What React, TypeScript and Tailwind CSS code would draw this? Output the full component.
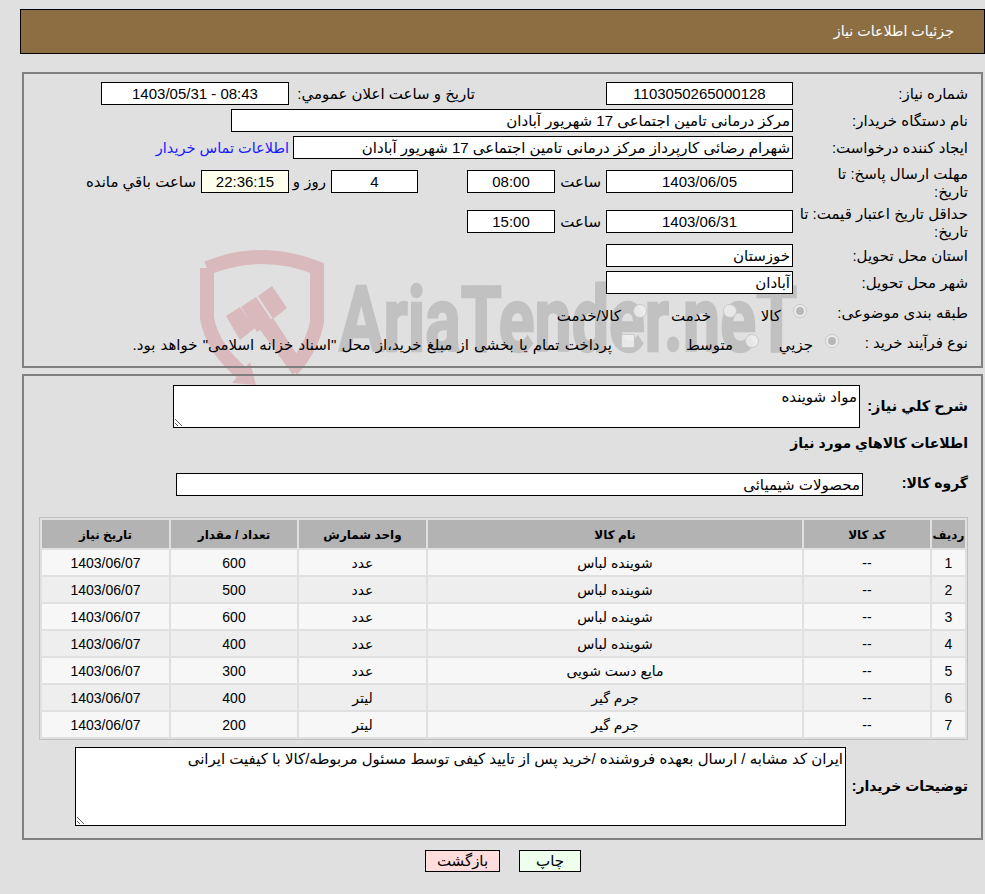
const F = "font-['Liberation_Sans','DejaVu_Sans',sans-serif]";

function Box({ w, children, center, bg }: { w: string; children?: React.ReactNode; center?: boolean; bg?: string }) {
  return (
    <div className={`${w} ${bg ?? "bg-white"} ${center ? "text-center" : "text-right"} h-[23px] shrink-0 border border-black px-[2px] leading-[21px] whitespace-nowrap overflow-hidden`}>
      {children}
    </div>
  );
}

function Radio({ checked }: { checked?: boolean }) {
  return (
    <span className="mt-[3px] flex h-[14px] w-[14px] shrink-0 items-center justify-center rounded-full border border-[#c8c8c8] bg-[#f0f0f0]/80">
      {checked && <span className="h-[8px] w-[8px] rounded-full bg-[#b8b8b8]" />}
    </span>
  );
}

const rows = [
  ["1", "--", "شوینده لباس", "عدد", "600", "1403/06/07"],
  ["2", "--", "شوینده لباس", "عدد", "500", "1403/06/07"],
  ["3", "--", "شوینده لباس", "عدد", "600", "1403/06/07"],
  ["4", "--", "شوینده لباس", "عدد", "400", "1403/06/07"],
  ["5", "--", "مایع دست شویی", "عدد", "300", "1403/06/07"],
  ["6", "--", "جرم گیر", "لیتر", "400", "1403/06/07"],
  ["7", "--", "جرم گیر", "لیتر", "200", "1403/06/07"],
];
const heads = ["رديف", "کد کالا", "نام کالا", "واحد شمارش", "تعداد / مقدار", "تاریخ نیاز"];
const widths = ["w-[33px]", "w-[126px]", "w-[374px]", "w-[127px]", "w-[126px]", "w-[127px]"];

function Watermark() {
  const c = "#d9b9bb";
  return (
    <svg dir="ltr" className="absolute left-[190px] top-[245px] z-0" width="795" height="150" viewBox="190 245 795 150">
      <path d="M207 268 Q262 246 317 268 L317 322 Q312 348 292 370" fill="none" stroke={c} strokeWidth="14" />
      <path d="M207 268 L207 318 Q212 348 243 374" fill="none" stroke={c} strokeWidth="14" />
      <path d="M258 327 L273 318 L302 362 L293 375 Z M250 362 L256 385 L232 383 Z" fill={c} />
      <path d="M226 316 L240 307 L255 328 L240 340 Z" fill={c} />
      <path d="M241 307 L256 297 L273 322 L257 332 Z" fill={c} />
      <path d="M258 296 L272 286 L287 308 L273 319 Z" fill={c} />
      <text x="339" y="351" direction="ltr" fill="#c1c1c1" stroke="#c1c1c1" strokeWidth="2.5" fontFamily="Roboto, sans-serif" fontWeight="700" fontSize="90" textLength="458" lengthAdjust="spacingAndGlyphs">AriaTender.neT</text>
    </svg>
  );
}

export default function App() {
  return (
    <div dir="rtl" className={`${F} relative h-[894px] w-[985px] overflow-hidden bg-[#e0e0e0] text-[15px] text-black`}>
      <Watermark />
      <div className="relative z-10 pl-5 pt-[9px]">
        <div className="flex h-[45px] items-center border border-black bg-[#8d6e42] pr-[30px] text-[14.25px] text-white">جزئیات اطلاعات نیاز</div>
      </div>

      <div className="relative z-10 ml-[22px] mr-[2px] mt-[18px] flex h-[296px] flex-col border-2 border-[#808080] pr-[13px] pt-[8px]">
        <div className="flex h-[27px]">
          <div className="w-[175px] shrink-0 pt-[1px]">شماره نیاز:</div>
          <Box w="w-[187px]" center>1103050265000128</Box>
          <div className="w-[131px] shrink-0" />
          <div className="w-[186px] shrink-0 pt-[1px]">تاریخ و ساعت اعلان عمومي:</div>
          <Box w="w-[188px]" center><span dir="ltr">1403/05/31 - 08:43</span></Box>
        </div>
        <div className="flex h-[27px]">
          <div className="w-[175px] shrink-0 pt-[1px]">نام دستگاه خریدار:</div>
          <Box w="w-[562px]">مرکز درمانی تامین اجتماعی 17 شهریور آبادان</Box>
        </div>
        <div className="flex h-[34px]">
          <div className="w-[175px] shrink-0 pt-[1px]">ایجاد کننده درخواست:</div>
          <Box w="w-[500px]">شهرام رضائی کارپرداز مرکز درمانی تامین اجتماعی 17 شهریور آبادان</Box>
          <a className="mr-[4px] pt-[2px] text-[14.5px] text-[#1a1aff]">اطلاعات تماس خریدار</a>
        </div>
        <div className="flex h-[40px]">
          <div className="-mt-[5px] w-[175px] shrink-0 pl-[15px] leading-[18px]">مهلت ارسال پاسخ: تا تاریخ:</div>
          <Box w="w-[187px]" center>1403/06/05</Box>
          <div className="w-[51px] shrink-0 pr-[5px] pt-[1px]">ساعت</div>
          <Box w="w-[88px]" center>08:00</Box>
          <div className="w-[49px] shrink-0" />
          <Box w="w-[87px]" center>4</Box>
          <div className="w-[42px] shrink-0 pr-[5px] pt-[1px]">روز و</div>
          <Box w="w-[88px]" center bg="bg-[#ffffee]">22:36:15</Box>
          <div className="whitespace-nowrap pr-[5px] pt-[1px]">ساعت باقي مانده</div>
        </div>
        <div className="flex h-[34px]">
          <div className="-mt-[5px] w-[175px] shrink-0 leading-[18px]">حداقل تاریخ اعتبار قیمت: تا تاریخ:</div>
          <Box w="w-[187px]" center>1403/06/31</Box>
          <div className="w-[51px] shrink-0 pr-[5px] pt-[1px]">ساعت</div>
          <Box w="w-[88px]" center>15:00</Box>
        </div>
        <div className="flex h-[27px]">
          <div className="w-[175px] shrink-0 pt-[1px]">استان محل تحویل:</div>
          <Box w="w-[187px]">خوزستان</Box>
        </div>
        <div className="flex h-[30px]">
          <div className="w-[175px] shrink-0 pt-[1px]">شهر محل تحویل:</div>
          <Box w="w-[187px]">آبادان</Box>
        </div>
        <div className="flex h-[30px] items-start">
          <div className="w-[161px] shrink-0 pt-[1px]">طبقه بندی موضوعی:</div>
          <Radio checked />
          <div className="mr-[12px] w-[44px] pt-[4px]">کالا</div>
          <Radio />
          <div className="mr-[12px] w-[64px] pt-[4px]">خدمت</div>
          <Radio />
          <div className="mr-[12px] pt-[4px]">کالا/خدمت</div>
        </div>
        <div className="flex h-[30px] items-start">
          <div className="w-[129px] shrink-0 pt-[1px]">نوع فرآیند خرید :</div>
          <Radio checked />
          <div className="mr-[12px] w-[54px] pt-[3px]">جزيي</div>
          <Radio />
          <div className="mr-[12px] w-[98px] pt-[3px]">متوسط</div>
          <span className="mt-[3px] h-[14px] w-[14px] shrink-0 rounded-[2px] border border-[#c8c8c8] bg-[#f0f0f0]/80" />
          <div className="mr-[9px] whitespace-nowrap pt-[3px] [word-spacing:1px]">پرداخت تمام یا بخشی از مبلغ خرید،از محل "اسناد خزانه اسلامی" خواهد بود.</div>
        </div>
      </div>

      <div className="relative z-10 ml-[22px] mr-[2px] mt-[6px] h-[466px] border-2 border-[#808080] pr-[13px] pt-[9px]">
        <div className="flex h-[43px]">
          <div className="w-[108px] shrink-0 whitespace-nowrap pt-[11px] text-[14.5px] font-bold">شرح كلي نياز:</div>
          <div className="h-[43px] w-[687px] resize overflow-hidden border border-black bg-white px-[2px]">مواد شوینده</div>
        </div>
        <div className="mt-[3px] h-[29px] text-[14px] font-bold leading-[24px]">اطلاعات كالاهاي مورد نياز</div>
        <div className="mt-[13px] flex h-[23px]">
          <div className="w-[105px] shrink-0 text-[14px] font-bold">گروه کالا:</div>
          <Box w="w-[687px]">محصولات شیمیائی</Box>
        </div>
        <table className="mt-[21px] w-[928px] table-fixed border-separate border-spacing-[2px] border border-[#c0c0c0] text-center text-[14px]">
          <thead>
            <tr>
              {heads.map((h, i) => (
                <th key={h} className={`${widths[i]} h-[28px] bg-[#b3b3b3] p-0 pt-[1px] text-[12px] font-bold`}>{h}</th>
              ))}
            </tr>
          </thead>
          <tbody>
            {rows.map((r, k) => (
              <tr key={r[0]} className={k % 2 === 0 ? "bg-[#f7f7f7]" : "bg-[#eeeeee]"}>
                {r.map((c, i) => (
                  <td key={i} className="h-[25px] p-0 pt-[1px]">{c}</td>
                ))}
              </tr>
            ))}
          </tbody>
        </table>
        <div className="mt-[7px] flex">
          <div className="w-[122px] shrink-0 whitespace-nowrap pt-[29px] text-[14px] font-bold">توضیحات خریدار:</div>
          <div className="h-[79px] w-[771px] resize overflow-hidden border border-black bg-white px-[2px]">ایران کد مشابه / ارسال بعهده فروشنده /خرید پس از تایید کیفی توسط مسئول مربوطه/کالا با کیفیت ایرانی</div>
        </div>
      </div>

      <div className="relative z-10 mt-[10px] flex justify-center gap-[19px] pl-[21px]">
        <div className="flex h-[22px] w-[62px] items-center justify-center border border-black bg-[#eeffee]">چاپ</div>
        <div className="flex h-[22px] w-[75px] items-center justify-center border border-black bg-[#ffdddd]">بازگشت</div>
      </div>
    </div>
  );
}
